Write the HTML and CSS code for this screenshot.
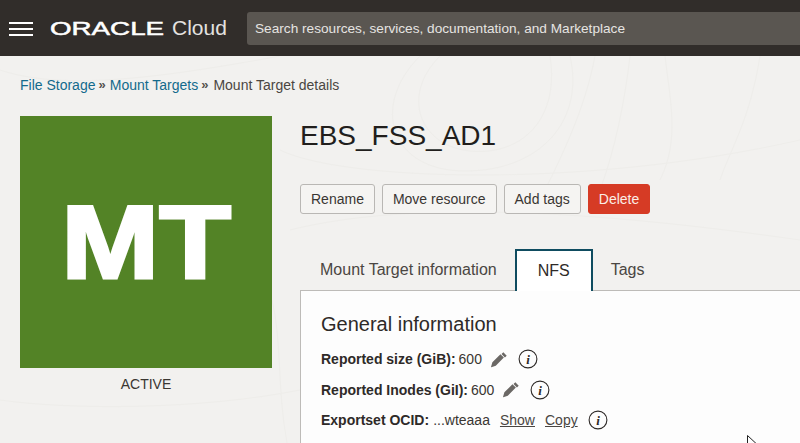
FILE: index.html
```html
<!DOCTYPE html>
<html lang="en">
<head>
  <meta charset="UTF-8">
  <title>Mount Target details</title>
  <link rel="stylesheet" href="styles.css">
</head>
<body>
  <!-- faint contour lines of the page background -->
  <svg class="bg-lines" viewBox="0 0 800 443">
    <path d="M440 56c-40 40-20 90 30 95s90-30 80-95"/>
    <path d="M420 56c-50 50-30 115 45 115s120-50 105-115"/>
    <path d="M540 200c20-40 45-90 55-144"/>
    <path d="M600 190c15-40 25-90 30-134"/>
    <path d="M660 180c20-40 10-80 5-124"/>
    <path d="M720 180c10-30 30-60 40-124"/>
    <path d="M280 150c60 30 300 40 520-10"/>
    <path d="M290 230c120-30 300-20 510 10"/>
    <path d="M0 70c60 20 150 10 280-14"/>
    <path d="M272 300c10 40 5 90 15 143"/>
    <path d="M0 400c70 10 200 10 300-10"/>
  </svg>

  <div class="header">
    <svg class="menu-icon" viewBox="0 0 24 16">
      <line x1="0" y1="2" x2="24" y2="2"/>
      <line x1="0" y1="8" x2="24" y2="8"/>
      <line x1="0" y1="14" x2="24" y2="14"/>
    </svg>
    <div class="logo">
      <span class="logo-oracle">ORACLE</span>
      <span class="logo-cloud">Cloud</span>
    </div>
    <div class="search">Search resources, services, documentation, and Marketplace</div>
  </div>

  <div class="content">
    <div class="breadcrumbs">
      <a class="crumb-link">File Storage</a><span class="crumb-sep">»</span>
      <a class="crumb-link">Mount Targets</a><span class="crumb-sep">»</span>
      <span class="crumb-current">Mount Target details</span>
    </div>

    <div class="detail">
      <div class="side">
        <div class="badge"><span class="badge-text">MT</span></div>
        <div class="status">ACTIVE</div>
      </div>

      <div class="main">
        <h1 class="title">EBS_FSS_AD1</h1>
        <div class="actions">
          <button class="btn">Rename</button>
          <button class="btn">Move resource</button>
          <button class="btn">Add tags</button>
          <button class="btn btn-danger">Delete</button>
        </div>

        <div class="tabs">
          <div class="tab">Mount Target information</div>
          <div class="tab tab-active">NFS</div>
          <div class="tab">Tags</div>
        </div>

        <div class="panel">
          <h2 class="panel-title">General information</h2>
          <div class="row">
            <b>Reported size (GiB):</b> <span>600</span>
            <svg class="pencil" viewBox="0 0 16 16"><path d="M11.6 1.2l3.2 3.2-1.7 1.7-3.2-3.2zM8.9 3l3.2 3.2-7.6 7.6-4.2 1.6-.3-.3 1.3-4.5z"/></svg>
            <svg class="info" viewBox="0 0 20 20"><circle cx="10" cy="10" r="8.9"/><text x="10" y="14.5">i</text></svg>
          </div>
          <div class="row">
            <b>Reported Inodes (GiI):</b> <span>600</span>
            <svg class="pencil" viewBox="0 0 16 16"><path d="M11.6 1.2l3.2 3.2-1.7 1.7-3.2-3.2zM8.9 3l3.2 3.2-7.6 7.6-4.2 1.6-.3-.3 1.3-4.5z"/></svg>
            <svg class="info" viewBox="0 0 20 20"><circle cx="10" cy="10" r="8.9"/><text x="10" y="14.5">i</text></svg>
          </div>
          <div class="row">
            <b>Exportset OCID:</b> <span class="ocid-value">...wteaaa</span>
            <a class="row-link">Show</a>
            <a class="row-link">Copy</a>
            <svg class="info" viewBox="0 0 20 20"><circle cx="10" cy="10" r="8.9"/><text x="10" y="14.5">i</text></svg>
          </div>
        </div>
      </div>
    </div>
  </div>

  <!-- mouse pointer caught in the screenshot -->
  <svg class="cursor" viewBox="0 0 12 18"><path d="M.5.5v15l4-3.6 3 5.6 2-1-3-5.4h5.4z"/></svg>
</body>
</html>
```

FILE: styles.css
```css
* {
  box-sizing: border-box;
}

html, body {
  height: 100%;
}

body {
  position: relative;
  margin: 0;
  overflow: hidden;
  font-family: "Liberation Sans", Arial, sans-serif;
  font-size: 14px;
  color: #3a3632;
  background-color: #f2f1ef;
}

.bg-lines {
  position: absolute;
  left: 0;
  top: 0;
  width: 800px;
  height: 443px;
  fill: none;
  stroke: #eeedea;
  stroke-width: 1;
}

/* Header */
.header {
  position: relative;
  display: flex;
  align-items: center;
  height: 56px;
  padding-left: 9px;
  background-color: #312d2a;
}

.menu-icon {
  width: 24px;
  height: 16px;
  margin-top: 1px;
  flex-shrink: 0;
  stroke: #fff;
  stroke-width: 2;
}

.logo {
  display: flex;
  align-items: center;
  width: 181px;
  margin-left: 17px;
  color: #fff;
}

.logo-oracle {
  display: inline-block;
  width: 116px;
  margin-top: 2px;
  font-size: 19px;
  -webkit-text-stroke: .5px #fff;
  transform: scaleX(1.46);
  transform-origin: left center;
}

.logo-cloud {
  margin-left: 6px;
  font-size: 21px;
  color: #e4e2e0;
}

.search {
  flex: 1;
  height: 33px;
  margin-top: 1px;
  margin-left: 16px;
  padding-left: 8px;
  border-radius: 3px 0 0 3px;
  background-color: #5a5651;
  color: #e6e4e1;
  font-size: 13.65px;
  line-height: 33px;
}

/* Page content */
.content {
  position: relative;
  padding: 20px 0 0 20px;
}

.breadcrumbs {
  display: flex;
  align-items: center;
  height: 17px;
  color: #4a4642;
}

.crumb-link {
  color: #136a8c;
}

.crumb-sep {
  margin: 0 4px 0 3px;
  color: #55514d;
  font-size: 13px;
  font-weight: 700;
}

.crumb-current {
  margin-left: 1px;
}

.detail {
  display: flex;
  margin-top: 23px;
}

.side {
  width: 252px;
  flex-shrink: 0;
}

.badge {
  display: flex;
  align-items: center;
  justify-content: center;
  width: 252px;
  height: 252px;
  background-color: #538326;
  color: #fff;
}

.badge-text {
  font-size: 104px;
  font-weight: 700;
  -webkit-text-stroke: 3px #fff;
  transform: scaleX(1.13);
}

.status {
  margin-top: 8px;
  text-align: center;
  color: #3a3632;
}

.main {
  flex: 1;
  margin-left: 28px;
}

.title {
  margin: 4px 0 0;
  font-size: 28px;
  font-weight: 400;
  line-height: 32px;
  color: #211e1c;
}

.actions {
  display: flex;
  gap: 7px;
  margin-top: 32px;
}

.btn {
  height: 30px;
  padding: 0 10px;
  border: 1px solid #b9b7b4;
  border-radius: 3px;
  background-color: #f5f4f2;
  color: #3a3632;
  font-family: inherit;
  font-size: 14px;
}

.btn-danger {
  border-color: #d63b25;
  background-color: #d63b25;
  color: #fbeee6;
}

/* Tabs */
.tabs {
  display: flex;
  height: 41px;
  margin-top: 35px;
  padding-left: 2px;
}

.tab {
  padding: 0 18px;
  font-size: 16px;
  line-height: 41px;
  color: #4a4642;
}

.tab-active {
  position: relative;
  z-index: 1;
  height: 42px;
  padding: 0 21px;
  border: 2px solid #0f4c60;
  border-bottom: none;
  background-color: #fff;
  color: #2e2a28;
  line-height: 39px;
}

.panel {
  height: 153px;
  padding: 21px 20px 0;
  border-top: 1px solid #bdbbb8;
  border-left: 1px solid #bdbbb8;
  background-color: #fdfdfd;
}

.panel-title {
  margin: 0;
  font-size: 20px;
  font-weight: 400;
  line-height: 24px;
  color: #2e2a28;
}

.row {
  display: flex;
  align-items: center;
  gap: 3px;
  height: 30.5px;
  color: #3a3632;
}

.row:first-of-type {
  margin-top: 8px;
}

.row b {
  color: #2e2a28;
}

.ocid-value {
  margin-left: 1px;
}

.row-link {
  margin-left: 7px;
  color: #4a4642;
  text-decoration: underline;
}

.pencil {
  width: 17px;
  height: 17px;
  margin-left: 6px;
  fill: #6b6865;
}

.info {
  width: 20px;
  height: 20px;
  margin-left: 7px;
  fill: none;
  stroke: #2e2a28;
  stroke-width: 1.1;
}

.info text {
  fill: #2e2a28;
  stroke: none;
  font-family: "Liberation Serif", serif;
  font-size: 13px;
  font-style: italic;
  font-weight: 700;
  text-anchor: middle;
}

.cursor {
  position: absolute;
  left: 747px;
  top: 435px;
  width: 12px;
  height: 18px;
  fill: #fff;
  stroke: #222;
  stroke-width: 1;
}
```
